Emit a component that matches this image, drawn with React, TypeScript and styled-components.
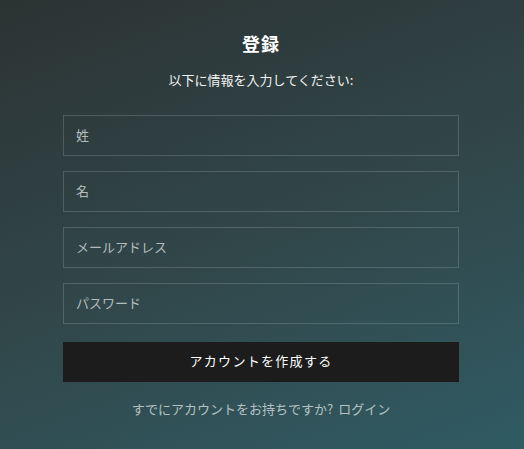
import React from "react";
import styled, { createGlobalStyle } from "styled-components";

const Global = createGlobalStyle`
  html, body { margin: 0; padding: 0; }
  body {
    font-family: "Noto Sans CJK JP", "Noto Sans", sans-serif;
    background: #2f4548;
  }
  * { box-sizing: border-box; }
`;

const Page = styled.div`
  width: 524px;
  height: 449px;
  background: linear-gradient(160deg, #2c3333 0%, #314649 50%, #305b63 100%);
  display: flex;
  justify-content: center;
  padding: 30px 2px 0 0;
`;

const Form = styled.form`
  width: 396px;
  display: flex;
  flex-direction: column;
  align-items: stretch;
`;

const Title = styled.h1`
  margin: 0;
  font-size: 18px;
  line-height: 26px;
  font-weight: 700;
  color: #ffffff;
  text-align: center;
  letter-spacing: 1px;
`;

const Subtitle = styled.p`
  margin: 14px 0 0;
  font-size: 13px;
  line-height: 20px;
  color: #f2f4f4;
  text-align: center;
`;

const Fields = styled.div`
  margin-top: 25px;
  display: flex;
  flex-direction: column;
  gap: 15px;
`;

const Input = styled.input`
  width: 100%;
  height: 41px;
  padding: 0 12px 2px;
  background: transparent;
  border: 1px solid rgba(255, 255, 255, 0.16);
  border-radius: 0;
  color: #ffffff;
  font-family: inherit;
  font-size: 13px;
  outline: none;
  &::placeholder {
    color: #b3bdbf;
  }
`;

const Button = styled.button`
  margin-top: 18px;
  height: 40px;
  width: 100%;
  padding: 0 0 3px;
  border: none;
  background: #1c1c1c;
  color: #ffffff;
  font-family: inherit;
  font-size: 13px;
  letter-spacing: 1.3px;
  cursor: pointer;
`;

const Footer = styled.p`
  margin: 17px 0 0;
  font-size: 13px;
  line-height: 20px;
  color: #b5c1c3;
  text-align: center;
`;

const Link = styled.a`
  color: inherit;
  text-decoration: none;
  margin-left: 5px;
`;

export default function App() {
  return (
    <>
      <Global />
      <Page>
        <Form onSubmit={(e) => e.preventDefault()}>
          <Title>登録</Title>
          <Subtitle>以下に情報を入力してください:</Subtitle>
          <Fields>
            <Input placeholder="姓" />
            <Input placeholder="名" />
            <Input placeholder="メールアドレス" />
            <Input placeholder="パスワード" type="password" />
          </Fields>
          <Button type="submit">アカウントを作成する</Button>
          <Footer>
            すでにアカウントをお持ちですか?<Link href="#">ログイン</Link>
          </Footer>
        </Form>
      </Page>
    </>
  );
}
